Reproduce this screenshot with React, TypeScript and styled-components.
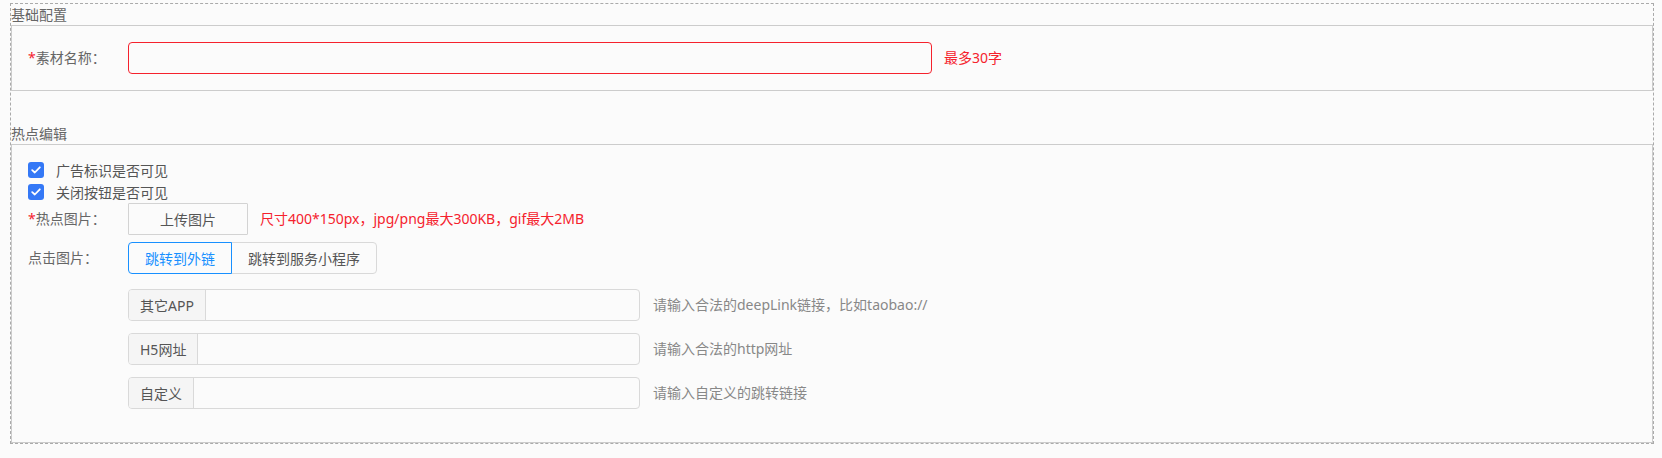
import React, {FC} from 'react';
import styled, {createGlobalStyle} from 'styled-components';

const GlobalStyle = createGlobalStyle`
	html, body {
		margin: 0;
		padding: 0;
		background: #fbfbfb;
	}
	body {
		font-family: 'Noto Sans', 'Noto Sans CJK SC', sans-serif;
		font-size: 14px;
		color: #555;
	}
`;

const RED = '#f5222d';
const BLUE = '#1890ff';

const StyledFrame = styled.div`
	margin: 3px 8px 0 10px;
	border: 1px dashed #aaa;
`;

const StyledLegend = styled.div<{$gap?: number}>`
	margin-top: ${({$gap}) => $gap || 0}px;
	height: 21px;
	line-height: 21px;
	color: #666;
`;

const StyledBox = styled.div<{$padding: string}>`
	border: 1px solid #ccc;
	padding: ${({$padding}) => $padding};
`;

const StyledRow = styled.div<{$gap?: number}>`
	display: flex;
	align-items: center;
	margin-top: ${({$gap}) => $gap || 0}px;
`;

const StyledLabel = styled.div<{$required?: boolean}>`
	width: 100px;
	flex-shrink: 0;
	color: #666;
	line-height: 20px;

	&::before {
		content: ${({$required}) => ($required ? "'*'" : "''")};
		color: ${RED};
	}
`;

const StyledNameInput = styled.input`
	box-sizing: border-box;
	width: 804px;
	height: 32px;
	border: 1px solid ${RED};
	border-radius: 4px;
	background: transparent;
	outline: none;
	padding: 0 11px;
	font: inherit;
`;

const StyledHint = styled.span<{$error?: boolean}>`
	margin-left: ${({$error}) => ($error ? 12 : 13)}px;
	line-height: 20px;
	color: ${({$error}) => ($error ? RED : '#888')};
	white-space: nowrap;
`;

const StyledCheckRow = styled.label`
	display: flex;
	align-items: center;
	height: 22px;
	color: #555;
`;

const StyledCheckBox = styled.span`
	display: flex;
	align-items: center;
	justify-content: center;
	width: 16px;
	height: 16px;
	border-radius: 3px;
	background: #3478f6;
	margin-right: 12px;
`;

const StyledUpload = styled.button`
	box-sizing: border-box;
	width: 120px;
	height: 32px;
	border: 1px solid #d3d3d3;
	border-radius: 1px;
	background: transparent;
	color: #555;
	font: inherit;
	padding: 0;
`;

const StyledRadioGroup = styled.div`
	display: flex;
`;

const StyledRadio = styled.button<{$active?: boolean}>`
	box-sizing: border-box;
	height: 32px;
	padding: 0 16px;
	font: inherit;
	background: transparent;
	color: ${({$active}) => ($active ? BLUE : '#555')};
	border: 1px solid ${({$active}) => ($active ? BLUE : '#d9d9d9')};
	margin-left: ${({$active}) => ($active ? 0 : -1)}px;
	position: relative;
	z-index: ${({$active}) => ($active ? 1 : 0)};

	&:first-child {
		border-radius: 4px 0 0 4px;
	}
	&:last-child {
		border-radius: 0 4px 4px 0;
	}
`;

const StyledLinkRow = styled.div<{$gap: number}>`
	display: flex;
	align-items: center;
	margin: ${({$gap}) => $gap}px 0 0 100px;
`;

const StyledInputGroup = styled.div`
	box-sizing: border-box;
	display: flex;
	width: 512px;
	height: 32px;
	border: 1px solid #d9d9d9;
	border-radius: 4px;
	overflow: hidden;
`;

const StyledAddon = styled.span`
	display: flex;
	align-items: center;
	padding: 0 11px;
	background: #f5f5f5;
	border-right: 1px solid #d9d9d9;
	color: #555;
	white-space: nowrap;
`;

const StyledGroupInput = styled.input`
	flex: 1;
	min-width: 0;
	border: none;
	outline: none;
	background: transparent;
	padding: 0 11px;
	font: inherit;
`;

const Check: FC = () => (
	<StyledCheckBox>
		<svg width='10' height='8' viewBox='0 0 10 8'>
			<path
				d='M1.2 4.1 L3.8 6.5 L8.8 1.3'
				fill='none'
				stroke='#fff'
				strokeWidth='1.8'
				strokeLinecap='round'
				strokeLinejoin='round'
			/>
		</svg>
	</StyledCheckBox>
);

const links = [
	{addon: '其它APP', hint: '请输入合法的deepLink链接，比如taobao://'},
	{addon: 'H5网址', hint: '请输入合法的http网址'},
	{addon: '自定义', hint: '请输入自定义的跳转链接'}
];

const App: FC = () => (
	<>
		<GlobalStyle />
		<StyledFrame>
			<StyledLegend>基础配置</StyledLegend>
			<StyledBox $padding='16px'>
				<StyledRow>
					<StyledLabel $required>素材名称：</StyledLabel>
					<StyledNameInput />
					<StyledHint $error>最多30字</StyledHint>
				</StyledRow>
			</StyledBox>

			<StyledLegend $gap={32}>热点编辑</StyledLegend>
			<StyledBox $padding='14px 16px 33px'>
				<StyledCheckRow>
					<Check />
					广告标识是否可见
				</StyledCheckRow>
				<StyledCheckRow>
					<Check />
					关闭按钮是否可见
				</StyledCheckRow>
				<StyledRow>
					<StyledLabel $required>热点图片：</StyledLabel>
					<StyledUpload>上传图片</StyledUpload>
					<StyledHint $error>尺寸400*150px，jpg/png最大300KB，gif最大2MB</StyledHint>
				</StyledRow>
				<StyledRow $gap={7}>
					<StyledLabel>点击图片：</StyledLabel>
					<StyledRadioGroup>
						<StyledRadio $active>跳转到外链</StyledRadio>
						<StyledRadio>跳转到服务小程序</StyledRadio>
					</StyledRadioGroup>
				</StyledRow>
				{links.map((link, i) => (
					<StyledLinkRow key={link.addon} $gap={i === 0 ? 15 : 12}>
						<StyledInputGroup>
							<StyledAddon>{link.addon}</StyledAddon>
							<StyledGroupInput />
						</StyledInputGroup>
						<StyledHint>{link.hint}</StyledHint>
					</StyledLinkRow>
				))}
			</StyledBox>
		</StyledFrame>
	</>
);

export default App;
